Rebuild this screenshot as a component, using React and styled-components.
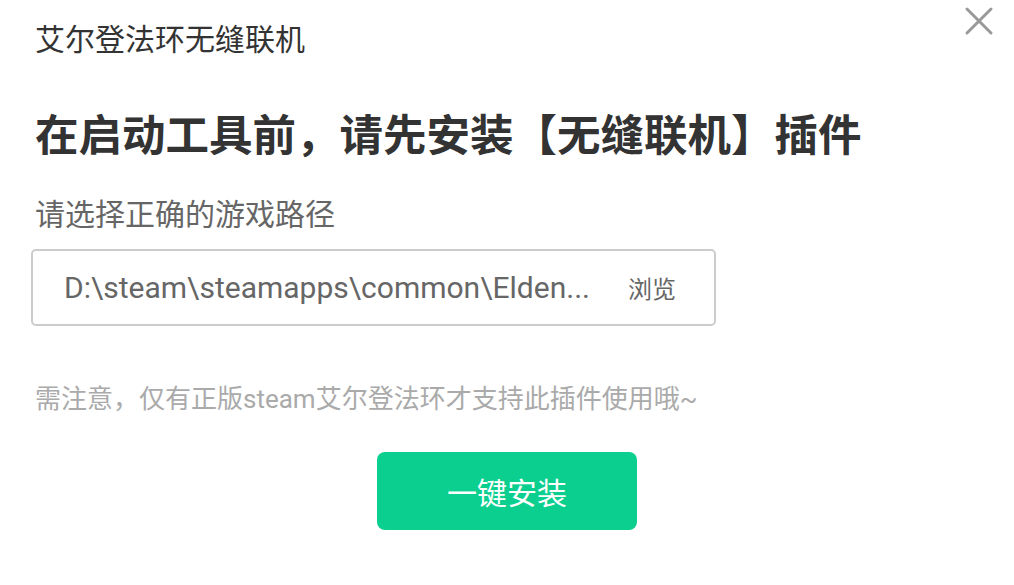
import styled, { createGlobalStyle } from "styled-components";

const GlobalStyle = createGlobalStyle`
  html, body {
    margin: 0;
    padding: 0;
    background: #fff;
    font-family: Roboto, "Noto Sans CJK SC", sans-serif;
  }
`;

const Dialog = styled.div`
  position: relative;
  width: 1014px;
  height: 585px;
  box-sizing: border-box;
  padding: 20px 0 0 35px;
  background: #fff;
`;

const Title = styled.h1`
  margin: 0;
  font-size: 30px;
  line-height: 40px;
  font-weight: 400;
  color: #333;
`;

const CloseButton = styled.button`
  position: absolute;
  top: 6px;
  right: 20px;
  width: 30px;
  height: 30px;
  padding: 0;
  border: none;
  background: none;
  cursor: pointer;
`;

const Heading = styled.h2`
  margin: 47px 0 0;
  font-size: 43.5px;
  line-height: 60px;
  font-weight: 700;
  color: #333;
`;

const Label = styled.div`
  margin-top: 28px;
  font-size: 30px;
  line-height: 40px;
  color: #666;
`;

const PathBox = styled.div`
  display: flex;
  align-items: center;
  width: 685px;
  height: 77px;
  box-sizing: border-box;
  margin: 14px 0 0 -4px;
  padding: 0 38px 0 31px;
  border: 2px solid #ccc;
  border-radius: 5px;
`;

const PathText = styled.span`
  flex: 1;
  font-size: 30px;
  color: #666;
  white-space: nowrap;
`;

const Browse = styled.span`
  font-size: 24px;
  color: #666;
`;

const Note = styled.p`
  margin: 58px 0 0;
  font-size: 26px;
  line-height: 30px;
  color: #aaa;
`;

const InstallRow = styled.div`
  display: flex;
  justify-content: center;
  margin: 38px 0 0 -35px;
`;

const InstallButton = styled.button`
  width: 260px;
  height: 78px;
  border: none;
  border-radius: 8px;
  background: #0acf8f;
  color: #fff;
  font-family: inherit;
  font-size: 30px;
  cursor: pointer;
`;

export default function App() {
  return (
    <>
      <GlobalStyle />
      <Dialog>
        <Title>艾尔登法环无缝联机</Title>
        <CloseButton aria-label="关闭">
          <svg width="30" height="30" viewBox="0 0 30 30">
            <path d="M3 3 L27 27 M27 3 L3 27" stroke="#999" strokeWidth="3" strokeLinecap="round" />
          </svg>
        </CloseButton>
        <Heading>在启动工具前，请先安装【无缝联机】插件</Heading>
        <Label>请选择正确的游戏路径</Label>
        <PathBox>
          <PathText>D:\steam\steamapps\common\Elden...</PathText>
          <Browse>浏览</Browse>
        </PathBox>
        <Note>需注意，仅有正版steam艾尔登法环才支持此插件使用哦~</Note>
        <InstallRow>
          <InstallButton>一键安装</InstallButton>
        </InstallRow>
      </Dialog>
    </>
  );
}
